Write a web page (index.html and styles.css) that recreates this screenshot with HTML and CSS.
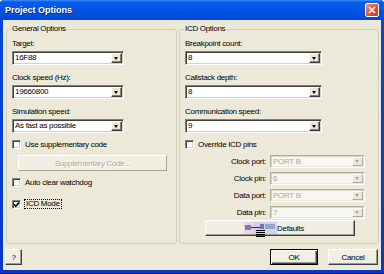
FILE: index.html
```html
<!DOCTYPE html>
<html lang="en">
<head>
    <meta charset="UTF-8">
    <title>Project Options</title>
    <link rel="stylesheet" href="styles.css">
</head>
<body>
    <div class="window">
        <div class="titlebar">
            <span class="title">Project Options</span>
            <span class="close">
                <svg width="8" height="8" viewBox="0 0 8 8"><path d="M1 1 L7 7 M7 1 L1 7" stroke="#fff" stroke-width="1.6"/></svg>
            </span>
        </div>
        <div class="client">
            <div class="groups">
                <fieldset class="group general">
                    <legend>General Options</legend>
                    <div class="field">
                        <label>Target:</label>
                        <div class="combo"><span class="value">16F88</span><span class="drop"></span></div>
                    </div>
                    <div class="field">
                        <label>Clock speed (Hz):</label>
                        <div class="combo"><span class="value">19660800</span><span class="drop"></span></div>
                    </div>
                    <div class="field">
                        <label>Simulation speed:</label>
                        <div class="combo"><span class="value">As fast as possible</span><span class="drop"></span></div>
                    </div>
                    <div class="check"><span class="box"></span>Use supplementary code</div>
                    <button class="btn supp" disabled>Supplementary Code...</button>
                    <div class="check"><span class="box"></span>Auto clear watchdog</div>
                    <div class="check icd-mode">
                        <span class="box checked">
                            <svg width="7" height="7" viewBox="0 0 7 7"><path d="M1 3.2 L2.8 5.2 L6.2 1.4" stroke="#000" stroke-width="1.6" fill="none"/></svg>
                        </span>
                        <span class="focus">ICD Mode</span>
                    </div>
                </fieldset>
                <fieldset class="group icd">
                    <legend>ICD Options</legend>
                    <div class="field">
                        <label>Breakpoint count:</label>
                        <div class="combo"><span class="value">8</span><span class="drop"></span></div>
                    </div>
                    <div class="field">
                        <label>Callstack depth:</label>
                        <div class="combo"><span class="value">8</span><span class="drop"></span></div>
                    </div>
                    <div class="field">
                        <label>Communication speed:</label>
                        <div class="combo"><span class="value">9</span><span class="drop"></span></div>
                    </div>
                    <div class="check"><span class="box"></span>Override ICD pins</div>
                    <div class="pins">
                        <label>Clock port:</label>
                        <div class="combo disabled"><span class="value">PORT B</span><span class="drop"></span></div>
                        <label>Clock pin:</label>
                        <div class="combo disabled"><span class="value">6</span><span class="drop"></span></div>
                        <label>Data port:</label>
                        <div class="combo disabled"><span class="value">PORT B</span><span class="drop"></span></div>
                        <label>Data pin:</label>
                        <div class="combo disabled"><span class="value">7</span><span class="drop"></span></div>
                    </div>
                    <button class="btn restore">
                        <svg class="glitch" width="33" height="15" viewBox="0 0 33 15">
                            <rect x="0" y="0" width="33" height="12" fill="#d9c8e6"/>
                            <rect x="0" y="0" width="10" height="12" fill="#e8d2ec"/>
                            <rect x="20" y="0" width="13" height="12" fill="#c9d6ee"/>
                            <rect x="1" y="3" width="6" height="5" fill="#8a7aa0"/>
                            <rect x="7" y="5" width="9" height="1" fill="#333"/>
                            <rect x="16" y="2" width="4" height="5" fill="#6b78b8"/>
                            <rect x="21" y="2" width="10" height="5" fill="#9aa4c8"/>
                            <rect x="12" y="8" width="9" height="1" fill="#000"/>
                            <rect x="12" y="10" width="9" height="1" fill="#000"/>
                            <rect x="12" y="12" width="9" height="1" fill="#000"/>
                            <rect x="12" y="14" width="9" height="1" fill="#000"/>
                        </svg>Defaults
                    </button>
                </fieldset>
            </div>
            <div class="footer">
                <button class="btn help">?</button>
                <span class="spacer"></span>
                <button class="btn ok">OK</button>
                <button class="btn cancel">Cancel</button>
            </div>
        </div>
    </div>
</body>
</html>
```

FILE: styles.css
```css
* {
    box-sizing: border-box;
}

body {
    margin: 0;
    background-color: #ffffff;
    font-family: 'Liberation Sans', Arial, sans-serif;
    font-size: 8px;
    letter-spacing: -0.3px;
    color: #000000;
}

.window {
    width: 384px;
    height: 274px;
    display: flex;
    flex-direction: column;
    background: linear-gradient(#0848d6, #0838c4);
    border-radius: 4px 4px 0 0;
    border-bottom: 1px solid #001a80;
    overflow: hidden;
}

.titlebar {
    height: 20px;
    display: flex;
    align-items: center;
    padding: 0 5px 0 5px;
    background: linear-gradient(#3d8ef8 0, #0a5ce8 2px, #0454e4 50%, #0049d8 100%);
}

.title {
    flex: 1;
    color: #ffffff;
    font-weight: bold;
    font-size: 9px;
    letter-spacing: 0;
    text-shadow: 1px 1px #0a2a8c;
}

.close {
    width: 14px;
    height: 14px;
    border: 1px solid #ffffff;
    border-radius: 2px;
    background: linear-gradient(135deg, #f09474, #dc5430 55%, #c43c1a);
    display: flex;
    align-items: center;
    justify-content: center;
}

.close svg {
    display: block;
}

.client {
    flex: 1;
    margin: 0 3px 3px;
    background-color: #ece9d8;
    padding: 4px 2px 0 3px;
    display: flex;
    flex-direction: column;
}

.groups {
    display: flex;
    gap: 2px;
}

.group {
    margin: 0;
    height: 220px;
    min-width: 0;
    border: 1px solid #d0d0bf;
    border-radius: 3px;
    padding: 5px 5px 0;
    display: flex;
    flex-direction: column;
    align-items: flex-start;
}

.general {
    width: 171px;
}

.icd {
    width: 200px;
}

legend {
    padding: 0 1px;
    margin-left: -1px;
    line-height: 10px;
}

.field label {
    display: block;
    line-height: 10px;
}

.field + .field {
    margin-top: 8px;
}

.general .combo {
    width: 112px;
}

.icd .field .combo {
    width: 137px;
}

.combo {
    margin-top: 2px;
    height: 14px;
    display: flex;
    padding: 1px;
    background-color: #ffffff;
    border: 1px solid;
    border-color: #808080 #ffffff #ffffff #808080;
    box-shadow: inset 1px 1px #404040, inset -1px -1px #d4d0c8;
}

.value {
    flex: 1;
    padding-left: 1px;
    line-height: 10px;
    white-space: nowrap;
    overflow: hidden;
}

.drop {
    width: 11px;
    background-color: #ece9d8;
    border: 1px solid;
    border-color: #ffffff #404040 #404040 #ffffff;
    box-shadow: inset -1px -1px #808080;
    position: relative;
}

.drop::after {
    content: '';
    position: absolute;
    left: 2px;
    top: 3px;
    border-left: 2.5px solid transparent;
    border-right: 2.5px solid transparent;
    border-top: 3px solid #000000;
}

.combo.disabled {
    margin-top: 0;
    height: 13px;
    background-color: #f7f6f1;
    border-color: #b0ada0 #ffffff #ffffff #b0ada0;
    box-shadow: inset 1px 1px #d8d5c8, inset -1px -1px #ece9d8;
}

.combo.disabled .value {
    color: #aca899;
    line-height: 9px;
}

.combo.disabled .drop {
    border-color: #ffffff #b0ada0 #b0ada0 #ffffff;
    box-shadow: none;
}

.combo.disabled .drop::after {
    top: 2px;
    border-top-color: #aca899;
}

.check {
    display: flex;
    align-items: center;
    gap: 4px;
    height: 10px;
    margin-top: 6px;
}

.box {
    width: 9px;
    height: 9px;
    flex: none;
    display: flex;
    align-items: center;
    justify-content: center;
    background-color: #ffffff;
    border: 1px solid;
    border-color: #808080 #ffffff #ffffff #808080;
    box-shadow: inset 1px 1px #404040, inset -1px -1px #d4d0c8;
}

.box svg {
    display: block;
}

.icd-mode {
    margin-top: 12px;
    gap: 3px;
}

.focus {
    border: 1px dotted #000000;
    padding: 0 1px;
    line-height: 8px;
}

.btn {
    font-family: inherit;
    font-size: 8px;
    letter-spacing: -0.3px;
    color: #000000;
    height: 16px;
    padding: 0;
    background-color: #f1efe4;
    border: 1px solid;
    border-color: #ffffff #404040 #404040 #ffffff;
    box-shadow: inset -1px -1px #9c9a8c;
}

.supp {
    width: 149px;
    margin: 6px 0 0 6px;
    color: #aca899;
    text-shadow: 1px 1px #ffffff;
    border-color: #ffffff #a8a596 #a8a596 #ffffff;
    box-shadow: none;
}

.pins {
    margin-top: 6px;
    width: 180px;
    display: grid;
    grid-template-columns: 1fr 95px;
    column-gap: 4px;
    row-gap: 4px;
    align-items: center;
}

.pins label {
    text-align: right;
}

.restore {
    width: 150px;
    margin: 1px 0 0 20px;
    display: flex;
    align-items: center;
    justify-content: center;
    padding-right: 12px;
}

.glitch {
    display: block;
    margin-top: 3px;
}

.footer {
    display: flex;
    align-items: center;
    padding-top: 5px;
    margin: 0 1px 0 -1px;
    gap: 10px;
}

.spacer {
    flex: 1;
}

.help {
    width: 17px;
}

.ok {
    width: 48px;
    border-color: #000000;
    box-shadow: inset 1px 1px #ffffff, inset -1px -1px #404040, inset -2px -2px #9c9a8c;
}

.cancel {
    width: 50px;
}
```
